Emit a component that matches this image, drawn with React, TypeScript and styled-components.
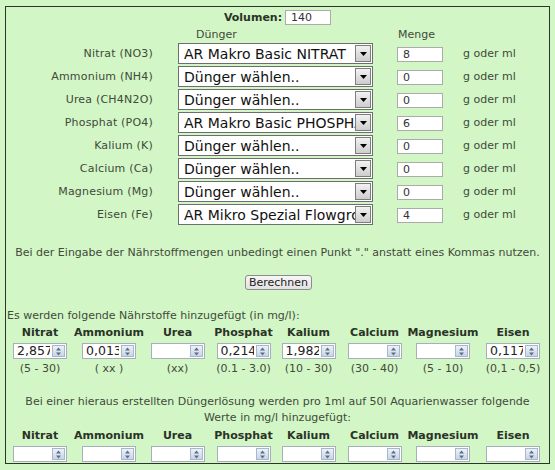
import React from 'react'
import styled, { createGlobalStyle } from 'styled-components'

const GlobalStyle = createGlobalStyle`
    body {
        margin: 0;
        background: #d3f6c6;
        font-family: "DejaVu Sans", Verdana, sans-serif;
        font-size: 11px;
        color: #3f4a3a;
    }
`

const Page = styled.div`
    width: 555px;
    height: 470px;
    padding: 6px 0 0 5px;
    box-sizing: border-box;
`
const Frame = styled.div`
    width: 545px;
    height: 458px;
    box-sizing: border-box;
    border: 1px solid #2c3529;
    display: flex;
    flex-direction: column;
`
const VolumeRow = styled.div`
    display: flex;
    justify-content: center;
    align-items: center;
    gap: 3px;
    margin-top: 3px;
    b { color: #2a3326; }
`
const TextBox = styled.div<{ $w: number }>`
    width: ${p => p.$w}px;
    height: 15px;
    box-sizing: border-box;
    border: 1px solid #ababab;
    background: #fff;
    padding-left: 5px;
    line-height: 13px;
    font-size: 11px;
    color: #333;
`
const FormGrid = styled.div`
    display: grid;
    grid-template-columns: 172px 219px 61px 1fr;
    grid-template-rows: 16px repeat(8, 23px);
    margin-top: 2px;
    align-items: start;
`
const ColHead = styled.div<{ $pad: number }>`
    height: 16px;
    line-height: 16px;
    padding-left: ${p => p.$pad}px;
`
const Label = styled.div`
    text-align: right;
    padding-right: 25px;
    line-height: 21px;
    letter-spacing: 0.2px;
`
const SelectBox = styled.div`
    width: 195px;
    height: 21px;
    box-sizing: border-box;
    border: 1px solid #6e6e6e;
    background: #fff;
    display: flex;
    align-items: center;
`
const SelectText = styled.span`
    flex: 1;
    overflow: hidden;
    white-space: nowrap;
    padding-left: 5px;
    font-size: 14px;
    color: #111;
`
const SelectArrow = styled.span`
    width: 16px;
    height: 17px;
    margin-right: 1px;
    box-sizing: border-box;
    border: 1px solid #7d7d7d;
    background: linear-gradient(#f2f2f2, #cdcdcd);
    display: flex;
    align-items: center;
    justify-content: center;
`
const AmountCell = styled.div`
    padding-top: 4px;
`
const Unit = styled.div`
    padding-left: 5px;
    line-height: 22px;
`
const Note = styled.div`
    text-align: center;
    margin-top: 19px;
    line-height: 14px;
`
const ButtonRow = styled.div`
    display: flex;
    justify-content: center;
    margin-top: 15px;
    padding-left: 2px;
`
const Button = styled.button`
    font-family: "DejaVu Sans", Verdana, sans-serif;
    font-size: 11px;
    color: #222;
    height: 15px;
    padding: 0 3px;
    line-height: 12px;
    border: 1px solid #8c8c8c;
    border-radius: 3px;
    background: linear-gradient(#f7f7f7, #e2e2e2);
`
const Intro = styled.div`
    margin-top: 19px;
    padding-left: 1px;
    line-height: 14px;
`
const ResultGrid = styled.div<{ $mt: number }>`
    display: grid;
    grid-template-columns: 68px 70px 67px 65px 65px 67px 70px 70px;
    margin-top: ${p => p.$mt}px;
    justify-items: center;
`
const Head = styled.div`
    font-weight: bold;
    color: #2a3326;
    line-height: 14px;
    margin-bottom: 3px;
`
const Range = styled.div`
    line-height: 14px;
    margin-top: 3px;
`
const Spinner = styled.div`
    width: 54px;
    height: 16px;
    box-sizing: border-box;
    border: 1px solid #a6b0ba;
    background: #fff;
    display: flex;
    align-items: center;
`
const SpinValue = styled.span`
    flex: 1;
    overflow: hidden;
    white-space: nowrap;
    padding-left: 3px;
    margin-right: 2px;
    font-size: 12.5px;
    line-height: 14px;
    color: #222;
`
const SpinButton = styled.span`
    width: 13px;
    height: 12px;
    margin-right: 1px;
    box-sizing: border-box;
    border: 1px solid #a7b7cc;
    background: linear-gradient(#eef2f8, #c9d5e4);
    display: flex;
    align-items: center;
    justify-content: center;
`
const Paragraph = styled.div`
    text-align: center;
    line-height: 16px;
    margin-top: 18px;
    padding: 0 4px;
`

const rows: [string, string, string][] = [
    ['Nitrat (NO3)', 'AR Makro Basic NITRAT', '8'],
    ['Ammonium (NH4)', 'Dünger wählen..', '0'],
    ['Urea (CH4N2O)', 'Dünger wählen..', '0'],
    ['Phosphat (PO4)', 'AR Makro Basic PHOSPHAT', '6'],
    ['Kalium (K)', 'Dünger wählen..', '0'],
    ['Calcium (Ca)', 'Dünger wählen..', '0'],
    ['Magnesium (Mg)', 'Dünger wählen..', '0'],
    ['Eisen (Fe)', 'AR Mikro Spezial Flowgrow', '4'],
]

const nutrients = ['Nitrat', 'Ammonium', 'Urea', 'Phosphat', 'Kalium', 'Calcium', 'Magnesium', 'Eisen']
const results = ['2,857', '0,013', '', '0,214', '1,982', '', '', '0,117']
const ranges = ['(5 - 30)', '( xx )', '(xx)', '(0.1 - 3.0)', '(10 - 30)', '(30 - 40)', '(5 - 10)', '(0,1 - 0,5)']

function SpinInput({ value }: { value: string }) {
    return (
        <Spinner>
            <SpinValue>{value}</SpinValue>
            <SpinButton>
                <svg width="7" height="9" viewBox="0 0 7 9">
                    <path d="M3.5 0.5 L6 3.5 H1 Z" fill="#5a6f8c" />
                    <path d="M3.5 8.5 L6 5.5 H1 Z" fill="#5a6f8c" />
                </svg>
            </SpinButton>
        </Spinner>
    )
}

export default function App() {
    return (
        <>
            <GlobalStyle />
            <Page>
                <Frame>
                    <VolumeRow>
                        <b>Volumen:</b>
                        <TextBox $w={46}>140</TextBox>
                    </VolumeRow>
                    <FormGrid>
                        <div />
                        <ColHead $pad={18}>Dünger</ColHead>
                        <ColHead $pad={1}>Menge</ColHead>
                        <div />
                        {rows.map(([label, product, amount]) => (
                            <React.Fragment key={label}>
                                <Label>{label}</Label>
                                <SelectBox>
                                    <SelectText>{product}</SelectText>
                                    <SelectArrow>
                                        <svg width="7" height="4" viewBox="0 0 7 4">
                                            <path d="M0 0 H7 L3.5 4 Z" fill="#000" />
                                        </svg>
                                    </SelectArrow>
                                </SelectBox>
                                <AmountCell><TextBox $w={46}>{amount}</TextBox></AmountCell>
                                <Unit>g oder ml</Unit>
                            </React.Fragment>
                        ))}
                    </FormGrid>
                    <Note>Bei der Eingabe der Nährstoffmengen unbedingt einen Punkt "." anstatt eines Kommas nutzen.</Note>
                    <ButtonRow><Button>Berechnen</Button></ButtonRow>
                    <Intro>Es werden folgende Nährstoffe hinzugefügt (in mg/l):</Intro>
                    <ResultGrid $mt={3}>
                        {nutrients.map(n => <Head key={n}>{n}</Head>)}
                        {results.map((v, i) => <SpinInput key={i} value={v} />)}
                        {ranges.map((r, i) => <Range key={i}>{r}</Range>)}
                    </ResultGrid>
                    <Paragraph>
                        Bei einer hieraus erstellten Düngerlösung werden pro 1ml auf 50l Aquarienwasser folgende Werte in mg/l hinzugefügt:
                    </Paragraph>
                    <ResultGrid $mt={3}>
                        {nutrients.map(n => <Head key={n}>{n}</Head>)}
                        {nutrients.map(n => <SpinInput key={n} value="" />)}
                    </ResultGrid>
                </Frame>
            </Page>
        </>
    )
}
